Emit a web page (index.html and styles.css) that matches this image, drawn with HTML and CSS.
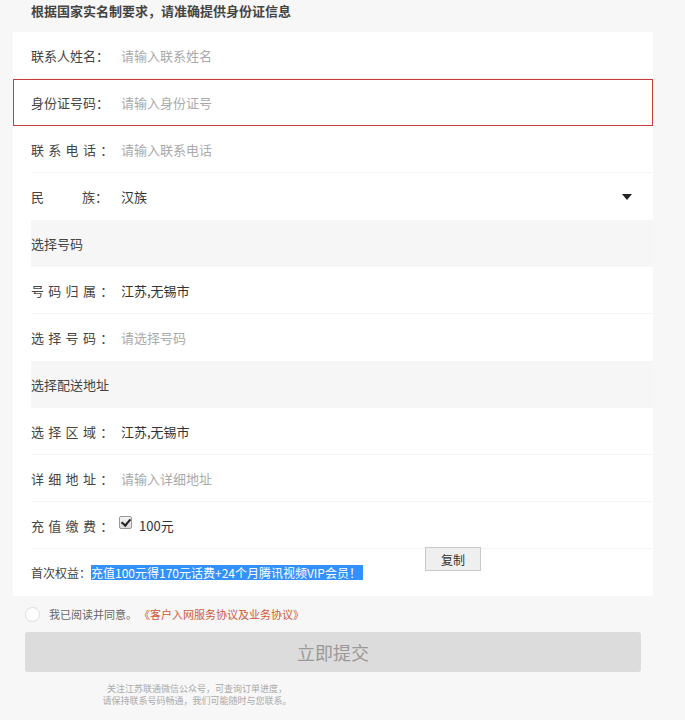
FILE: index.html
```html
<!DOCTYPE html>
<html lang="zh">
<head>
<meta charset="utf-8">
<link rel="stylesheet" href="styles.css">
</head>
<body>
<div class="page">
  <div class="notice">根据国家实名制要求，请准确提供身份证信息</div>
  <div class="card">
    <div class="row"><span class="label">联系人姓名：</span><span class="ph">请输入联系姓名</span></div>
    <div class="row error"><span class="label">身份证号码：</span><span class="ph">请输入身份证号</span></div>
    <div class="row"><span class="label spaced">联系电话：</span><span class="ph">请输入联系电话</span></div>
    <div class="row noline"><span class="label justify"><span>民</span><span>族：</span></span><span class="val grow">汉族</span><span class="arrow"></span></div>
    <div class="section">选择号码</div>
    <div class="row"><span class="label spaced">号码归属：</span><span class="val">江苏,无锡市</span></div>
    <div class="row noline"><span class="label spaced">选择号码：</span><span class="ph">请选择号码</span></div>
    <div class="section">选择配送地址</div>
    <div class="row"><span class="label spaced">选择区域：</span><span class="val">江苏,无锡市</span></div>
    <div class="row"><span class="label spaced">详细地址：</span><span class="ph">请输入详细地址</span></div>
    <div class="row"><span class="label spaced">充值缴费：</span><span class="check"></span><span class="val">100元</span></div>
    <div class="row noline bonus"><span class="small">首次权益：</span><span class="hl">充值100元得170元话费+24个月腾讯视频VIP会员！</span><button class="copy">复制</button></div>
  </div>
  <div class="agree"><span class="radio"></span><span class="agree-text">我已阅读并同意。</span><span class="link">《客户入网服务协议及业务协议》</span></div>
  <div class="submit">立即提交</div>
  <div class="foot">关注江苏联通微信公众号，可查询订单进度，<br>请保持联系号码畅通，我们可能随时与您联系。</div>
</div>
</body>
</html>
```

FILE: styles.css
```css
html, body {
  margin: 0;
  padding: 0;
  background: #f7f7f7;
}
body {
  font-family: "Microsoft YaHei", "Noto Sans CJK SC", "Liberation Sans", sans-serif;
  color: #333;
  font-size: 13px;
}
.page {
  width: 685px;
  height: 720px;
  overflow: hidden;
}
.notice {
  height: 22px;
  line-height: 22px;
  padding-left: 31px;
  margin-top: 0;
  font-weight: bold;
  font-size: 13px;
  color: #444;
  padding-bottom: 10px;
}
.card {
  background: #fff;
  width: 640px;
  margin-left: 13px;
  display: flex;
  flex-direction: column;
}
.row {
  height: 47px;
  box-sizing: border-box;
  margin-left: 18px;
  display: flex;
  align-items: center;
  border-bottom: 1px solid #f3f3f3;
  position: relative;
}
.row.noline {
  border-bottom: none;
}
.row.error {
  margin-left: 0;
  padding-left: 17px;
  border: 1px solid #cc3b3b;
}
.label {
  width: 90px;
  color: #444;
  white-space: nowrap;
}
.label.spaced {
  letter-spacing: 4.3px;
}
.label.justify {
  display: flex;
  justify-content: space-between;
  width: 77px;
  margin-right: 13px;
}
.ph {
  color: #aaa;
}
.val {
  color: #333;
}
.grow {
  flex: 1;
}
.arrow {
  width: 0;
  height: 0;
  border-left: 5px solid transparent;
  border-right: 5px solid transparent;
  border-top: 6px solid #222;
  margin-right: 21px;
}
.section {
  height: 47px;
  margin-left: 18px;
  background: #f6f6f6;
  display: flex;
  align-items: center;
  color: #444;
}
.check {
  width: 11px;
  height: 11px;
  border: 1px solid #999;
  border-radius: 2px;
  background: linear-gradient(#f4f4f4, #dcdcdc);
  margin-left: -2px;
  margin-right: 7px;
  margin-top: -6px;
  position: relative;
}
.check::after {
  content: "";
  position: absolute;
  left: 3px;
  top: 0px;
  width: 4px;
  height: 7px;
  border-right: 2px solid #222;
  border-bottom: 2px solid #222;
  transform: rotate(40deg);
}
.bonus {
  font-size: 12px;
}
.small {
  color: #444;
}
.hl {
  background: #3390ff;
  color: #fff;
  font-size: 12px;
  line-height: 15px;
  padding-right: 2px;
}
.copy {
  align-self: flex-start;
  margin-top: -2px;
  margin-left: 62px;
  width: 56px;
  height: 24px;
  border: 1px solid #c8c8c8;
  background: #efefef;
  font-family: inherit;
  font-size: 12px;
  color: #333;
  padding: 0;
}
.agree {
  display: flex;
  align-items: center;
  height: 36px;
  padding-left: 25px;
  font-size: 11px;
}
.radio {
  width: 13px;
  height: 13px;
  border: 1px solid #ddd;
  border-radius: 50%;
  background: #fff;
  margin-right: 9px;
}
.agree-text {
  color: #666;
  margin-right: 2px;
}
.link {
  color: #d0573a;
}
.submit {
  margin-left: 25px;
  width: 616px;
  height: 40px;
  background: #dcdcdc;
  border-radius: 3px;
  display: flex;
  align-items: center;
  justify-content: center;
  font-size: 18px;
  color: #999;
}
.foot {
  width: 394px;
  text-align: center;
  font-size: 9px;
  line-height: 12px;
  color: #aaa;
  margin-top: 11px;
}
```
